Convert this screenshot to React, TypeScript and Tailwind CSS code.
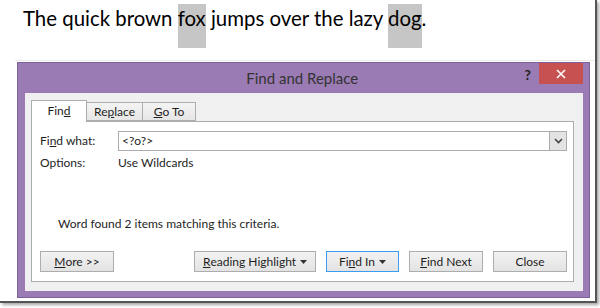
const font = { fontFamily: '"Lato", "Noto Sans", sans-serif' };

function Btn({
  children,
  width,
  focused = false,
}: {
  children: React.ReactNode;
  width: string;
  focused?: boolean;
}) {
  return (
    <div
      className={`${width} flex h-[21px] items-center justify-center border bg-gradient-to-b from-[#f2f2f2] to-[#e3e3e3] text-[12px] text-[#1e1e1e] ${
        focused ? "border-[#3c9cf2]" : "border-[#adadad]"
      }`}
    >
      {children}
    </div>
  );
}

function Caret() {
  return (
    <svg width="7" height="4" viewBox="0 0 7 4" className="ml-[4px] mt-[1px]">
      <path d="M0 0h7L3.5 4z" fill="#333" />
    </svg>
  );
}

export default function App() {
  return (
    <div className="h-[308px] w-[600px] overflow-hidden bg-white" style={font}>
      <div className="flex h-[303px] w-[597px] flex-col border-b-[2px] border-r-[2px] border-[#555] shadow-[2px_2px_3px_rgba(0,0,0,0.35)]">
        {/* document text */}
        <div className="flex h-[62px] flex-col">
          <div className="flex h-[60px] pl-[23px] pt-[4px] text-[20.4px] leading-[28px] text-black">
            <span className="whitespace-pre">The quick brown </span>
            <span className="h-[44px] bg-[#c6c6c6]">fox</span>
            <span className="whitespace-pre"> jumps over the lazy </span>
            <span className="h-[44px] bg-[#c6c6c6]">dog</span>
            <span>.</span>
          </div>
          <div className="ml-[15px] h-px bg-[#ececec]" />
        </div>

        {/* dialog */}
        <div className="ml-[17px] flex h-[236px] w-[573px] flex-col border border-[#7e619c] bg-[#9b7bb3]">
          <div className="flex h-[30px] items-start">
            <div className="flex flex-1 justify-center pl-[62px] pt-[5px] text-[15px] leading-[20px] text-[#333]">
              Find and Replace
            </div>
            <div className="mr-[8px] pt-[3px] text-[14px] font-bold leading-[18px] text-[#222]">?</div>
            <div className="mr-[6px] flex h-[21px] w-[44px] items-center justify-center bg-[#c75050]">
              <svg width="10" height="10" viewBox="0 0 10 10">
                <path d="M1 1l8 8M9 1l-8 8" stroke="#fff" strokeWidth="1.6" />
              </svg>
            </div>
          </div>

          <div className="mb-[6px] ml-[7px] mr-[6px] flex flex-1 flex-col bg-[#f0f0f0] pb-[9px] pl-[6px] pr-[9px] pt-[7px]">
            {/* tabs */}
            <div className="relative z-10 flex h-[21px] items-end text-[12px] text-[#1e1e1e]">
              <div className="-mb-px flex h-[22px] w-[56px] items-center justify-center border border-b-0 border-[#adadad] bg-white pb-[2px]">
                Fin<u>d</u>
              </div>
              <div className="flex h-[19px] w-[56px] items-center justify-center border border-l-0 border-[#adadad] bg-gradient-to-b from-[#f4f4f4] to-[#e6e6e6]">
                Re<u>p</u>lace
              </div>
              <div className="flex h-[19px] w-[53px] items-center justify-center border border-l-0 border-[#adadad] bg-gradient-to-b from-[#f4f4f4] to-[#e6e6e6]">
                <u>G</u>o To
              </div>
            </div>

            {/* panel */}
            <div className="flex flex-1 flex-col border border-[#adadad] bg-white pb-[9px] pl-[8px] pr-[6px] pt-[9px] text-[12px] text-[#1e1e1e]">
              <div className="flex h-[20px] items-center">
                <div className="w-[78px]">
                  Fi<u>n</u>d what:
                </div>
                <div className="flex h-[20px] flex-1 items-center border border-[#acacac] pl-[3px]">
                  <span className="flex-1">&lt;?o?&gt;</span>
                  <div className="flex h-[18px] w-[17px] items-center justify-center border-l border-[#acacac] bg-[#e3e3e3]">
                    <svg width="9" height="6" viewBox="0 0 9 6">
                      <path d="M1 1l3.5 3.5L8 1" stroke="#444" strokeWidth="1.6" fill="none" />
                    </svg>
                  </div>
                </div>
              </div>
              <div className="mt-[3px] flex h-[18px] items-center">
                <div className="w-[78px]">Options:</div>
                <div>Use Wildcards</div>
              </div>

              <div className="mt-[44px] pl-[18px] leading-[16px]">
                Word found 2 items matching this criteria.
              </div>

              <div className="mt-auto flex items-center">
                <Btn width="w-[74px]">
                  <u>M</u>ore &gt;&gt;
                </Btn>
                <div className="flex-1" />
                <div className="flex gap-[10px]">
                  <Btn width="w-[122px]">
                    <u>R</u>eading Highlight
                    <Caret />
                  </Btn>
                  <Btn width="w-[73px]" focused>
                    Fi<u>n</u>d In
                    <Caret />
                  </Btn>
                  <Btn width="w-[74px]">
                    <u>F</u>ind Next
                  </Btn>
                  <Btn width="w-[74px]">Close</Btn>
                </div>
              </div>
            </div>
          </div>
        </div>
      </div>
    </div>
  );
}
